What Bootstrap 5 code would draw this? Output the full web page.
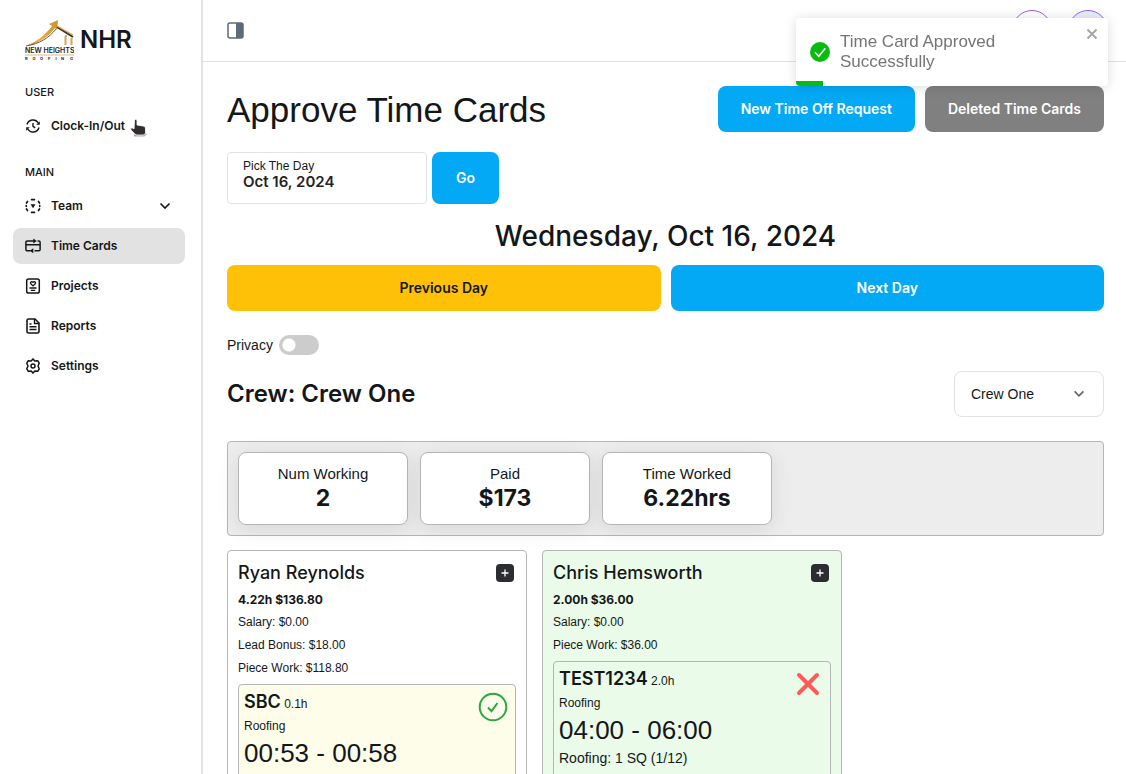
<!DOCTYPE html>
<html lang="en">
<head>
<meta charset="utf-8">
<meta name="viewport" content="width=device-width, initial-scale=1">
<title>Approve Time Cards</title>
<link href="https://cdn.jsdelivr.net/npm/bootstrap@5.3.0/dist/css/bootstrap.min.css" rel="stylesheet">
<style>
  body { font-family: "Liberation Sans", Arial, sans-serif; font-size: 14px; line-height: 20px; color: #141719; background: #fff; }
  h1, h2, h3, h4, p { margin: 0; }
  .medium { font-family: Inter, sans-serif; font-weight: 500; }
  .semi { font-family: Inter, sans-serif; font-weight: 600; }
  .heavy { font-family: Inter, sans-serif; font-weight: 700; }

  /* sidebar */
  .side { width: 203px; border-right: 2px solid #e0e2e6; padding: 16px 16px 16px 13px; }
  .brand { padding-left: 12px; height: 48px; gap: 6px; color: #141719; text-decoration: none; font-size: 24px; }
  .side-title { font-size: 11px; line-height: 16px; padding-left: 12px; margin: 20px 0 8px; }
  .side-list a { height: 36px; padding: 0 12px; gap: 10px; border-radius: 8px; color: #141719; text-decoration: none; font-size: 12px; margin-bottom: 4px; }
  .side-list a.current { background: #e2e2e2; }
  .side-list svg { width: 16px; height: 16px; flex: none; }
  .side-list .chevron { width: 12px; height: 12px; margin-right: 2px; }
  .pointer { position: absolute; left: 130px; top: 118px; }

  /* page */
  .page { overflow: auto; scrollbar-width: none; }
  .topbar { height: 62px; border-bottom: 1px solid #e0e2e6; padding: 0 18px 0 24px; }
  .round { width: 40px; height: 40px; border: 1px solid #9b5cf6; border-radius: 50%; background: #fff; padding: 0; margin-top: -2px; }
  .round.tint { background: #e8effc; }
  .content { padding: 24px 22px 0 24px; }
  .page-title { font-size: 35px; line-height: 48px; margin-bottom: -2px; font-weight: 400; }
  .action { height: 46px; border: 0; border-radius: 8px; font-family: Inter, sans-serif; font-weight: 600; font-size: 14px; padding: 0 23px 2px; --bs-btn-color: #fff; }
  .sky { --bs-btn-bg: #04a9f5; --bs-btn-hover-bg: #0396da; --bs-btn-hover-color: #fff; }
  .slate { --bs-btn-bg: #808080; --bs-btn-hover-bg: #707070; --bs-btn-hover-color: #fff; }
  .amber { --bs-btn-color: #141719; --bs-btn-bg: #ffc107; --bs-btn-hover-bg: #e6ad00; }
  .go { height: 52px; padding: 0 24px 2px; }
  .day-form { gap: 5px; margin-top: 20px; }
  .day-box { width: 200px; height: 52px; border: 1px solid #e0e2e6; border-radius: 4px; padding: 6px 15px; }
  .day-box label { display: block; font-size: 12px; line-height: 14px; }
  .day-box input { display: block; width: 100%; border: 0; padding: 0; outline: 0; font-size: 15px; line-height: 18px; height: 18px; color: #1f2326; }
  .day-title { font-size: 28px; line-height: 32px; margin: 16px 0 13px; }
  .gap-10 { gap: 10px; }
  .privacy { margin-top: 24px; gap: 6px; }
  .privacy input { appearance: none; width: 40px; height: 20px; border-radius: 10px; background: #ccc radial-gradient(circle at 10px 10px, #fff 6px, #ccc 7px); margin: 0; }
  .privacy input:checked { background: #04a9f5 radial-gradient(circle at 30px 10px, #fff 6px, #04a9f5 7px); }
  .crew-row { margin-top: 16px; }
  .crew-row h3 { font-size: 24px; line-height: 32px; }
  .crew-pick { width: 150px; height: 46px; border-radius: 8px; border-color: #e0e2e6; font-size: 14px; padding: 0 36px 0 16px; color: #141719;
    background-image: url("data:image/svg+xml,%3Csvg xmlns='http://www.w3.org/2000/svg' viewBox='0 0 16 16'%3E%3Cpath fill='none' stroke='%23666' stroke-width='2' d='M3 5l5 5 5-5'/%3E%3C/svg%3E"); background-size: 14px; background-position: right 17px center; }
  .totals { margin-top: 24px; padding: 10px; gap: 12px; background: #ededed; border: 1px solid #b5b5b5; border-radius: 4px; }
  .total { width: 170px; height: 73px; background: #fff; border: 1px solid #b5b5b5; border-radius: 8px; box-shadow: 0 4px 20px rgba(60,60,60,.12); padding: 11px 0; }
  .total dt { font-weight: 400; line-height: 20px; font-size: 15px; }
  .total dd { font-size: 23px; line-height: 28px; margin: 0; }
  .crew { margin-top: 14px; gap: 15px; }
  .worker { width: 300px; border: 1px solid #b5b5b5; border-radius: 4px; padding: 10px; font-size: 12px; line-height: 23px; }
  .worker h3 { font-size: 18px; line-height: 24px; }
  .worker-head { margin-bottom: 3px; padding-right: 2px; }
  .add { width: 18px; height: 18px; border: 0; border-radius: 4px; background: #2b2d30; color: #fff; padding: 0; }
  .add svg, .mark-btn svg { display: block; }
  .job { min-height: 140px; border: 1px solid #b5b5b5; border-radius: 4px; padding: 4px 5px 12px; margin-top: 4px; font-size: 12px; line-height: 20px; }
  .job h4 { font-size: 18px; line-height: 26px; }
  .job .kind { line-height: 22px; }
  .job .span-time { font-size: 26px; line-height: 32px; }
  .job .detail { font-size: 14px; line-height: 24px; }
  .mark-btn { border: 0; background: none; padding: 0; height: 30px; margin: 3px 2px 0 0; }
  .wash { background: #eafbe9; }
  .cream { background: #fdfdea; }

  /* toast */
  .notice-wrap { filter: drop-shadow(0 1px 6px rgba(0,0,0,.14)); }
  .notice { position: absolute; top: 18px; right: 18px; width: 312px; height: 68px; background: #fff; border-radius: 4px; overflow: hidden; color: #757575; font-size: 17px; padding: 0 14px; gap: 10px; }
  .notice .dismiss { position: absolute; top: 8px; right: 8px; border: 0; background: none; padding: 0; width: 16px; height: 16px; }
  .notice .dismiss svg { display: block; }
  .notice .timer { position: absolute; left: 0; bottom: 0; height: 5px; background: #07bc0c; }
</style>
</head>
<body>
<div class="d-flex vh-100 overflow-hidden position-relative">

  <aside class="side flex-shrink-0">
    <a href="#" class="brand d-flex align-items-center semi">
      <svg width="49" height="42" viewBox="0 0 49 42" aria-hidden="true">
        <defs><linearGradient id="gold" x1="0" x2="1"><stop offset="0" stop-color="#a87332"/><stop offset=".4" stop-color="#efb04c"/><stop offset="1" stop-color="#c9952c"/></linearGradient></defs>
        <path d="M1 27C13 22 21 15 27 7l-3-2 9-4-1 10-2-2C24 17 14 25 1 27z" fill="url(#gold)"/>
        <path d="M1 27C14 25 24 19 31 10" fill="none" stroke="#4a3526" stroke-width=".8"/>
        <path d="M32 8l16 10" stroke="#34302c" stroke-width="2"/><path d="M32 7l16 9" stroke="#d9a34a" stroke-width="1.400"/>
        <path d="M40.500 26V17M46.500 26V19M40 17h2" fill="none" stroke="#dda05a" stroke-width="2"/>
        <path d="M0 36h49" stroke="#e1ba7c" stroke-width="1"/>
        <text x="0" y="34" font-family="Inter, sans-serif" font-size="7" font-weight="600" fill="#222">NEW HEIGHTS</text>
        <text y="41" font-family="Inter, sans-serif" font-size="4" font-weight="700" fill="#222"><tspan x="0 7.500 15 23 30.500 36 45">ROOFING</tspan></text>
      </svg>
      NHR
    </a>
    <h2 class="side-title medium">USER</h2>
    <nav class="side-list semi" aria-label="User">
      <a href="#" class="d-flex align-items-center">
        <svg viewBox="0 0 16 16" fill="none" stroke="#141719" stroke-width="1.400"><path d="M2 6.500A6.200 6.200 0 0 1 13.300 5M14 9.500A6.200 6.200 0 0 1 2.700 11M8 5v3.300l2.200 1.500"/><path d="M14.800 3.200v3.500h-3.600zM1.200 12.800V9.300h3.600z" fill="#141719" stroke="none"/></svg>
        Clock-In/Out</a>
    </nav>
    <h2 class="side-title medium">MAIN</h2>
    <nav class="side-list semi" aria-label="Main">
      <a href="#" class="d-flex align-items-center">
        <svg viewBox="0 0 16 16" fill="none" stroke="#141719" stroke-width="1.700"><path d="M6.600 1.600h2.800M6.600 14.400h2.800M1.500 5l1-1.500M13.500 3.500l1 1.500M1.500 11l1 1.500M13.500 12.500l1-1.500M1.300 7.700v.6M14.700 7.700v.6" stroke-linecap="round"/><path d="M5.500 6.200h5L8 10.200z" fill="#141719" stroke="none"/></svg>
        <span class="flex-grow-1">Team</span>
        <svg class="chevron" viewBox="0 0 12 12" fill="none" stroke="#141719" stroke-width="1.600"><path d="M1.500 3.500L6 8l4.500-4.500"/></svg></a>
      <a href="#" class="d-flex align-items-center current" aria-current="page">
        <svg viewBox="0 0 16 16" fill="none" stroke="#141719" stroke-width="1.500"><path d="M5.500 12.800H2.200a1.300 1.300 0 0 1-1.300-1.300V4.300C.9 3.500 1.500 3 2.200 3H9M12.500 3h1.300c.8 0 1.300.6 1.300 1.300v7.200c0 .8-.5 1.300-1.300 1.300H9.500M1 6.800h14"/><path d="M8.300.5L11.800 3 8.300 5.500zM8.300 10.300L4.800 12.800l3.500 2.500z" fill="#141719" stroke="none"/></svg>
        Time Cards</a>
      <a href="#" class="d-flex align-items-center">
        <svg viewBox="0 0 16 16" fill="none" stroke="#141719" stroke-width="1.500"><rect x="1.700" y="1" width="12.600" height="14" rx="1.800"/><path d="M8 7.900L5.800 5.800C4.800 4.600 6.400 3 8 4.300c1.600-1.300 3.200.3 2.200 1.500zM4.500 10h7M5.800 12.300h4.400" stroke-width="1.300"/></svg>
        Projects</a>
      <a href="#" class="d-flex align-items-center">
        <svg viewBox="0 0 16 16" fill="none" stroke="#141719" stroke-width="1.600"><path d="M10 1H3.500C2.700 1 2 1.700 2 2.500v11c0 .8.700 1.500 1.500 1.500h9c.8 0 1.500-.7 1.500-1.500V5z"/><path d="M9.500 1v4.500H14M4.500 6h2M4.500 8.700h7M4.500 11.500h7" stroke-width="1.400"/></svg>
        Reports</a>
      <a href="#" class="d-flex align-items-center">
        <svg viewBox="0 0 16 16" fill="none" stroke="#141719" stroke-width="1.500" stroke-linejoin="round"><path d="M6.200 3L8 .9 9.800 3l2.900-.3 1.500 2.500L13 8l1.200 2.800-1.500 2.500-2.900-.3L8 15.100 6.200 13l-2.900.3-1.500-2.500L3 8 1.800 5.200l1.500-2.500z"/><circle cx="8" cy="8" r="2"/></svg>
        Settings</a>
    </nav>
  </aside>

  <div class="page flex-grow-1">
    <header class="topbar d-flex justify-content-between align-items-center">
      <button class="btn border-0 p-0" type="button" aria-label="Toggle sidebar">
        <svg class="d-block" width="17" height="17" viewBox="0 0 17 17"><rect x="1" y="1" width="15" height="15" rx="2" fill="#fff" stroke="#5b6b79" stroke-width="1.500"/><path d="M9 1h5a2 2 0 0 1 2 2v11a2 2 0 0 1-2 2H9z" fill="#5b6b79"/></svg>
      </button>
      <div class="d-flex gap-3">
        <button class="round" type="button" aria-label="Notifications"></button>
        <button class="round tint" type="button" aria-label="Account"></button>
      </div>
    </header>

    <main class="content">
      <div class="d-flex justify-content-between">
        <h1 class="page-title">Approve Time Cards</h1>
        <div class="d-flex gap-10">
          <button class="btn action sky" type="button">New Time Off Request</button>
          <button class="btn action slate" type="button">Deleted Time Cards</button>
        </div>
      </div>

      <form class="day-form d-flex">
        <div class="day-box">
          <label for="day">Pick The Day</label>
          <input id="day" class="semi" type="text" value="Oct 16, 2024">
        </div>
        <button class="btn action sky go" type="button">Go</button>
      </form>

      <h2 class="day-title medium text-center">Wednesday, Oct 16, 2024</h2>
      <div class="d-flex gap-10">
        <button class="btn action amber flex-fill w-50" type="button">Previous Day</button>
        <button class="btn action sky flex-fill w-50" type="button">Next Day</button>
      </div>

      <div class="privacy d-flex align-items-center">
        <label for="privacy">Privacy</label>
        <input id="privacy" type="checkbox" role="switch">
      </div>

      <div class="crew-row d-flex justify-content-between align-items-center">
        <h3 class="semi">Crew: Crew One</h3>
        <select class="form-select crew-pick" aria-label="Crew"><option>Crew One</option></select>
      </div>

      <dl class="totals d-flex mb-0 text-center">
        <div class="total"><dt>Num Working</dt><dd class="heavy">2</dd></div>
        <div class="total"><dt>Paid</dt><dd class="heavy">$173</dd></div>
        <div class="total"><dt>Time Worked</dt><dd class="heavy">6.22hrs</dd></div>
      </dl>

      <div class="crew d-flex align-items-stretch">
        <section class="worker">
          <div class="worker-head d-flex justify-content-between align-items-center">
            <h3 class="medium">Ryan Reynolds</h3>
            <button class="add" type="button" aria-label="Add time card"><svg width="18" height="18" viewBox="0 0 18 18" stroke="#fff" stroke-width="1.300"><path d="M9 5.500v7M5.500 9h7"/></svg></button>
          </div>
          <p class="heavy">4.22h $136.80</p>
          <p>Salary: $0.00</p>
          <p>Lead Bonus: $18.00</p>
          <p>Piece Work: $118.80</p>
          <article class="job cream">
            <div class="d-flex justify-content-between align-items-start">
              <div>
                <h4 class="semi d-inline">SBC</h4> <span>0.1h</span>
                <p class="kind">Roofing</p>
              </div>
              <button class="mark-btn" type="button" aria-label="Approve"><svg width="30" height="30" viewBox="0 0 30 30" fill="none" stroke="#28a745" stroke-width="2"><circle cx="15" cy="15" r="13.300"/><path d="M10 15.500l3.500 3.700 6-8.200"/></svg></button>
            </div>
            <p class="span-time">00:53 - 00:58</p>
          </article>
        </section>

        <section class="worker wash">
          <div class="worker-head d-flex justify-content-between align-items-center">
            <h3 class="medium">Chris Hemsworth</h3>
            <button class="add" type="button" aria-label="Add time card"><svg width="18" height="18" viewBox="0 0 18 18" stroke="#fff" stroke-width="1.300"><path d="M9 5.500v7M5.500 9h7"/></svg></button>
          </div>
          <p class="heavy">2.00h $36.00</p>
          <p>Salary: $0.00</p>
          <p>Piece Work: $36.00</p>
          <article class="job">
            <div class="d-flex justify-content-between align-items-start">
              <div>
                <h4 class="semi d-inline">TEST1234</h4> <span>2.0h</span>
                <p class="kind">Roofing</p>
              </div>
              <button class="mark-btn" type="button" aria-label="Remove approval"><svg width="30" height="30" viewBox="0 0 30 30" fill="none" stroke="#ff5a5a" stroke-width="4" stroke-linecap="round"><path d="M6 6l18 18M24 6L6 24"/></svg></button>
            </div>
            <p class="span-time">04:00 - 06:00</p>
            <p class="detail">Roofing: 1 SQ (1/12)</p>
          </article>
        </section>
      </div>
    </main>
  </div>

  <div class="notice-wrap">
    <div class="notice d-flex align-items-center" role="alert">
      <svg class="flex-shrink-0" width="20" height="20" viewBox="0 0 20 20"><circle cx="10" cy="10" r="10" fill="#07bc0c"/><path d="M5 10.300l3.800 3.900 6.500-8" fill="none" stroke="#fff" stroke-width="1.600"/></svg>
      <div class="pe-5">Time Card Approved Successfully</div>
      <button class="dismiss" type="button" aria-label="Close"><svg width="16" height="16" viewBox="0 0 16 16" stroke="#a6a6a6" stroke-width="2"><path d="M3.500 3.500l9 9M12.500 3.500l-9 9"/></svg></button>
      <div class="timer" style="width:27px"></div>
    </div>
  </div>

  <svg class="pointer" width="17" height="20" viewBox="0 0 17 20" aria-hidden="true">
    <path d="M4 17.500h10l2-2" fill="none" stroke="#aaa" stroke-width="2"/>
    <path d="M4.500 3c0-2 2.500-2 2.500 0v4l6 1c1.500 0 2.500 1 2.500 3v3c0 2-1 3-2.500 3H7c-1 0-2-1-3-2l-3-3c-1-2 1-3 3-1z" fill="#332d31" stroke="#fff" stroke-width=".8"/>
  </svg>
</div>
<script src="https://cdn.jsdelivr.net/npm/bootstrap@5.3.0/dist/js/bootstrap.bundle.min.js"></script>
</body>
</html>
